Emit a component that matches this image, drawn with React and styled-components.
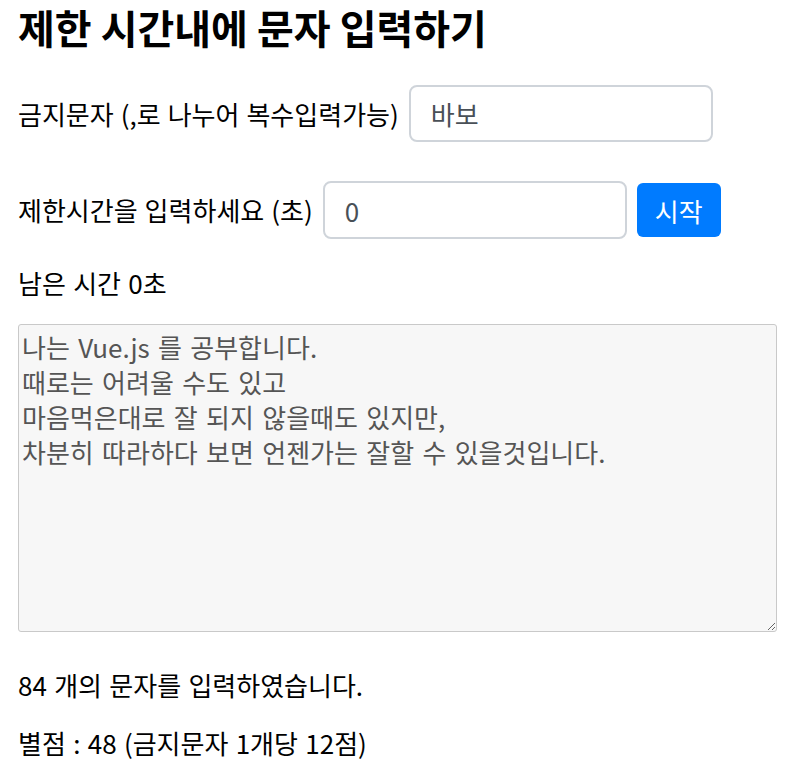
import React from "react";
import styled, { createGlobalStyle } from "styled-components";

const Global = createGlobalStyle`
  html, body { margin: 0; padding: 0; background: #fff; }
  body { font-family: "Noto Sans CJK KR", "Noto Sans", sans-serif; color: #000; }
  * { box-sizing: border-box; }
`;

const Page = styled.div`
  padding: 0 16px 20px 18px;
`;

const Title = styled.h2`
  margin: 0;
  font-size: 40px;
  line-height: 54px;
  font-weight: 700;
`;

const Row = styled.div`
  display: flex;
  align-items: center;
  gap: 10px;
  margin-top: ${(p) => p.$mt}px;
`;

const Label = styled.label`
  font-size: 26px;
  line-height: 30px;
  word-spacing: 1.2px;
  white-space: nowrap;
`;

const Input = styled.input`
  width: 304px;
  height: ${(p) => p.$h || 57}px;
  border: 2.5px solid #cfd4da;
  border-radius: 8px;
  padding: 0 20px;
  font-family: inherit;
  font-size: 26px;
  color: #495057;
  background: #fff;
  outline: none;
`;

const Button = styled.button`
  width: 84px;
  height: 54px;
  border: none;
  border-radius: 6px;
  background: #007bff;
  color: #fff;
  font-family: inherit;
  font-size: 26px;
  padding: 0;
  cursor: pointer;
`;

const Text = styled.p`
  margin: ${(p) => p.$mt}px 0 0;
  font-size: 26px;
  line-height: 30px;
  word-spacing: 1.5px;
`;

const Area = styled.textarea`
  display: block;
  margin-top: 26px;
  width: 759px;
  height: 308px;
  border: 1px solid #c9c9c9;
  border-radius: 3px;
  background: #f7f7f7;
  color: #555;
  font-family: inherit;
  font-size: 26px;
  line-height: 35px;
  word-spacing: 2.5px;
  padding: 4px 3px;
  resize: both;
  outline: none;
`;

const content = `나는 Vue.js 를 공부합니다.
때로는 어려울 수도 있고
마음먹은대로 잘 되지 않을때도 있지만,
차분히 따라하다 보면 언젠가는 잘할 수 있을것입니다.`;

export default function App() {
  return (
    <Page>
      <Global />
      <Title>제한 시간내에 문자 입력하기</Title>
      <Row $mt={31}>
        <Label>금지문자 (,로 나누어 복수입력가능)</Label>
        <Input defaultValue="바보" />
      </Row>
      <Row $mt={39}>
        <Label>제한시간을 입력하세요 (초)</Label>
        <Input defaultValue="0" $h={58} />
        <Button>시작</Button>
      </Row>
      <Text $mt={29}>남은 시간 0초</Text>
      <Area defaultValue={content} />
      <Text $mt={38}>84 개의 문자를 입력하였습니다.</Text>
      <Text $mt={28}>별점 : 48 (금지문자 1개당 12점)</Text>
    </Page>
  );
}
